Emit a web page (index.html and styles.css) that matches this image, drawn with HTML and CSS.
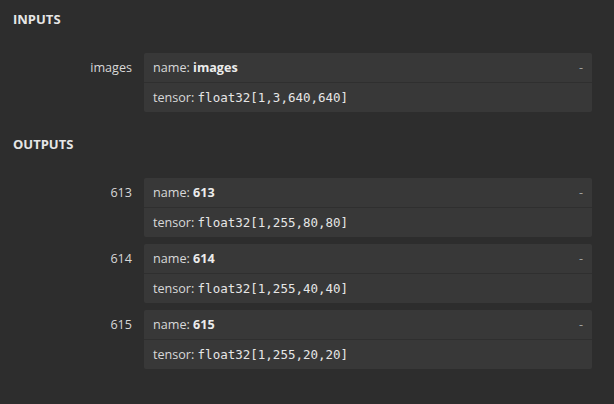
FILE: index.html
```html
<!DOCTYPE html>
<html>
<head>
<meta charset="utf-8">
<link rel="stylesheet" href="styles.css">
</head>
<body>
<div class="sidebar">
  <section class="section">
    <div class="section-title">INPUTS</div>
    <div class="list">
      <div class="item">
        <div class="item-name">images</div>
        <div class="box">
          <div class="row head"><span>name: <b>images</b></span><span class="toggle">-</span></div>
          <div class="row">tensor: <code>float32[1,3,640,640]</code></div>
        </div>
      </div>
    </div>
  </section>
  <section class="section">
    <div class="section-title">OUTPUTS</div>
    <div class="list">
      <div class="item">
        <div class="item-name">613</div>
        <div class="box">
          <div class="row head"><span>name: <b>613</b></span><span class="toggle">-</span></div>
          <div class="row">tensor: <code>float32[1,255,80,80]</code></div>
        </div>
      </div>
      <div class="item">
        <div class="item-name">614</div>
        <div class="box">
          <div class="row head"><span>name: <b>614</b></span><span class="toggle">-</span></div>
          <div class="row">tensor: <code>float32[1,255,40,40]</code></div>
        </div>
      </div>
      <div class="item">
        <div class="item-name">615</div>
        <div class="box">
          <div class="row head"><span>name: <b>615</b></span><span class="toggle">-</span></div>
          <div class="row">tensor: <code>float32[1,255,20,20]</code></div>
        </div>
      </div>
    </div>
  </section>
</div>
</body>
</html>
```

FILE: styles.css
```css
html, body {
  margin: 0;
  padding: 0;
  background: #2d2d2d;
  height: 100%;
}
body {
  font-family: "Open Sans", "Noto Sans", sans-serif;
  font-size: 12.6px;
  color: #d8d8d8;
}
.sidebar {
  padding: 11px 22px 0 13px;
}
.section {
  margin-bottom: 24px;
}
.section-title {
  font-weight: 700;
  font-size: 13px;
  line-height: 16px;
  color: #e6e6e6;
  margin-bottom: 26px;
}
.list {
  display: flex;
  flex-direction: column;
  gap: 7px;
}
.item {
  display: flex;
  align-items: flex-start;
  gap: 12px;
}
.item-name {
  width: 119px;
  text-align: right;
  line-height: 16px;
  padding-top: 7px;
  color: #d8d8d8;
}
.box {
  flex: 1;
  background: #383838;
  border-radius: 2px;
}
.row {
  height: 29px;
  box-sizing: border-box;
  padding: 7px 9px 0 9px;
  line-height: 16px;
  white-space: nowrap;
}
.row + .row {
  border-top: 1px solid #2f2f2f;
  height: 30px;
  padding-top: 7px;
}
.head {
  display: flex;
  justify-content: space-between;
}
.head b {
  font-weight: 700;
  color: #ececec;
}
.toggle {
  color: #a0a0a0;
}
code {
  font-family: "DejaVu Sans Mono", monospace;
  font-size: 12.5px;
  color: #e6e6e6;
}
```
